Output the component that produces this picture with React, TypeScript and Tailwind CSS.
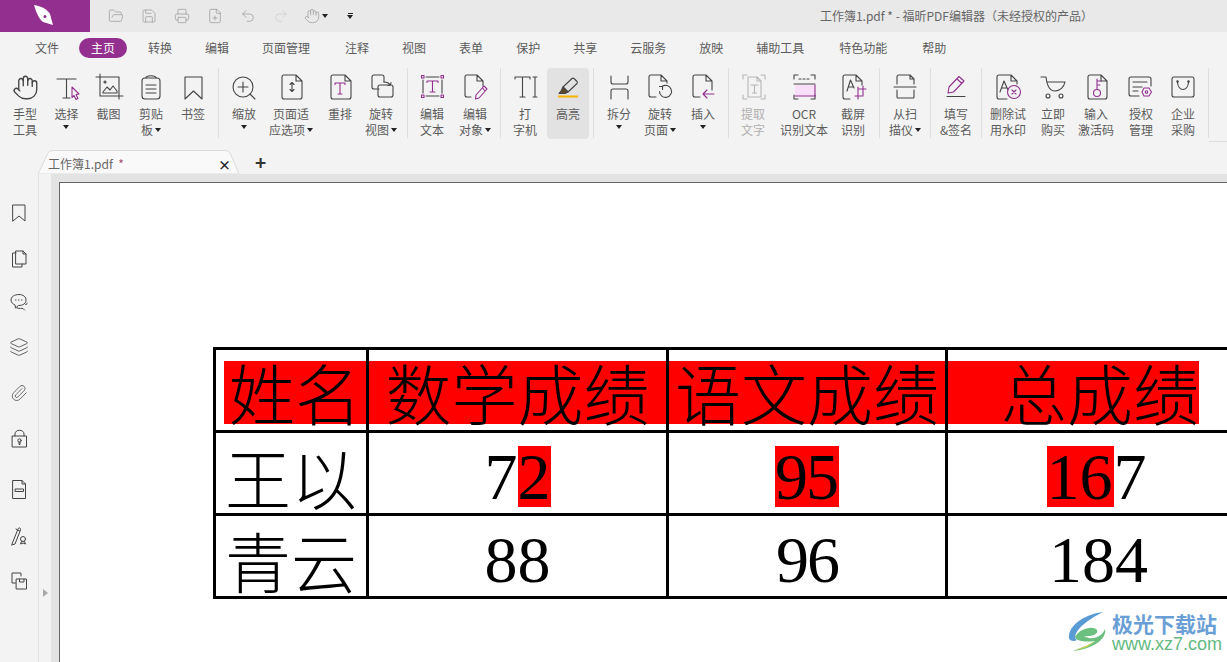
import type {ReactNode} from 'react'
import {FolderOpen, Hand, Layers, Paperclip, Printer, Redo2, Save, FilePlus, Undo2} from 'lucide-react'

const P = '#93308f'
const INK = '#444'

const DOC = 'M9 2H21L27 8V24a2 2 0 0 1-2 2H9a2 2 0 0 1-2-2V4a2 2 0 0 1 2-2z M21 2V8H27'

function Ico({children}: {children: ReactNode}) {
  return (
    <svg width="32" height="28" viewBox="0 0 32 28" fill="none" stroke={INK} strokeWidth="1.1" strokeLinecap="round" strokeLinejoin="round" className="shrink-0">
      {children}
    </svg>
  )
}

function Caret() {
  return <span className="inline-block w-0 h-0 border-x-[3.5px] border-t-[4px] border-x-transparent border-t-[#222]" />
}

type Item = {
  w: string
  a: string
  b?: string
  caret?: 'inline' | 'below'
  off?: boolean
  on?: boolean
  icon: ReactNode
  sep?: string
}

const items: Item[] = [
  {w: 'w-[42px]', a: '手型', b: '工具', icon: <div className="w-8 h-7 flex items-center justify-center"><Hand size={27} strokeWidth={1.2} color={INK} /></div>},
  {w: 'w-[41px]', a: '选择', caret: 'below', icon: <Ico><path d="M6 6H25 M15.5 6V25 M12 25H19" /><path d="M21 14L28 21L25 21.5L27 25.5L25 26.5L23 22.5L21 24.5Z" stroke={P} /></Ico>},
  {w: 'w-[43px]', a: '截图', icon: <Ico><path d="M3 4H26V26 M7 1V23H30" /><path d="M10 19l4-5 3 3 3-4 4 5v2H10z" /><circle cx="12" cy="9" r="1" /></Ico>},
  {w: 'w-[42px]', a: '剪贴', b: '板', caret: 'inline', icon: <Ico><rect x="7" y="5" width="18" height="21" rx="3" /><path d="M11 5c0-3 10-3 10 0 M11 12H21 M11 16H21 M11 20H21" /></Ico>},
  {w: 'w-[42px]', a: '书签', sep: 'ml-[4px] mr-[7px]', icon: <Ico><path d="M8 4H25V26L16.500 18L8 26Z" /></Ico>},
  {w: 'w-[36px]', a: '缩放', caret: 'below', icon: <Ico><circle cx="15" cy="14" r="10" /><path d="M22 21L27 26 M10 14H20 M15 9V19" /></Ico>},
  {w: 'w-[58px]', a: '页面适', b: '应选项', caret: 'inline', icon: <Ico><path d={DOC} /><path d="M17 10V18 M15 11.500L17 9.500L19 11.500 M15 16.500L17 18.500L19 16.500" /></Ico>},
  {w: 'w-[40px]', a: '重排', icon: <Ico><path d={DOC} /><path d="M11 10H21 M11 10v1.500 M21 10v1.500 M16 10V21 M14 21H18" stroke={P} /></Ico>},
  {w: 'w-[42px]', a: '旋转', b: '视图', caret: 'inline', sep: 'ml-[5px] mr-[4px]', icon: <Ico><path d="M14 16H9a2 2 0 0 1-2-2V4a2 2 0 0 1 2-2H17a2 2 0 0 1 2 2V9" /><path d="M13 14a2 2 0 0 1 2-2H26a2 2 0 0 1 2 2V22a2 2 0 0 1-2 2H15a2 2 0 0 1-2-2z" /><path d="M19 9c3 0 5 1 6 3 M23 12.500L25.500 12L26 9.500" /></Ico>},
  {w: 'w-[40px]', a: '编辑', b: '文本', icon: <Ico><path d="M10 4H23 M10 23H23 M7 7V20 M26 7V20" /><path d="M11 8H22 M11 8v1.500 M22 8v1.500 M16.500 8V19 M14 19H19" stroke={P} /><rect x="5.500" y="2.500" width="2.500" height="2.500" stroke={P} /><rect x="25" y="2.500" width="2.500" height="2.500" stroke={P} /><rect x="5.500" y="22" width="2.500" height="2.500" stroke={P} /><rect x="25" y="22" width="2.500" height="2.500" stroke={P} /></Ico>},
  {w: 'w-[46px]', a: '编辑', b: '对象', caret: 'inline', sep: 'ml-[2px] mr-[4px]', icon: <Ico><path d="M12 24H8a2 2 0 0 1-2-2V4a2 2 0 0 1 2-2H18L24 8V13 M18 2V8H24" /><path d="M17 22L25 13L28 16L20 25L16.500 26Z M23.500 15L26 18" stroke={P} /></Ico>},
  {w: 'w-[40px]', a: '打', b: '字机', icon: <Ico><path d="M6 6V4H21V6 M13.500 4V24 M11 24H16 M26 4V24 M24 4H28 M24 24H28" /></Ico>},
  {w: 'w-[42px] ml-[2px]', a: '高亮', on: true, sep: 'ml-[4px] mr-[5px]', icon: <Ico><path d="M11 14L20 5.500a1.500 1.500 0 0 1 2 0L25 8.500a1.500 1.500 0 0 1 0 2L16 19Z" /><path d="M11 14L9 18L7 20.500H13L16 19Z" fill="#5b4a2a" /><path d="M6 23.500H26" stroke="#f5b400" strokeWidth="2" strokeLinecap="butt" /></Ico>},
  {w: 'w-[40px]', a: '拆分', caret: 'below', icon: <Ico><path d="M8 3V9a2 2 0 0 0 2 2H23a2 2 0 0 0 2-2V3 M8 26V18a2 2 0 0 1 2-2H23a2 2 0 0 1 2 2V26" /></Ico>},
  {w: 'w-[42px]', a: '旋转', b: '页面', caret: 'inline', icon: <Ico><path d="M12 24H7a2 2 0 0 1-2-2V4a2 2 0 0 1 2-2H17L23 8V10 M17 2V8H23" /><path d="M18 13.500a6 6 0 1 1-2.500 5 M15.500 13.500H18.500V16.500" /></Ico>},
  {w: 'w-[44px]', a: '插入', caret: 'below', sep: 'ml-[3px] mr-[4px]', icon: <Ico><path d="M13 24H8a2 2 0 0 1-2-2V4a2 2 0 0 1 2-2H19L25 8V17 M19 2V8H25" /><path d="M27 21H16 M20 17L16 21L20 25" stroke={P} /></Ico>},
  {w: 'w-[40px]', a: '提取', b: '文字', off: true, icon: <Ico><g stroke="#b5b5b5"><path d="M6 6V2H10 M24 2H28V6 M6 22V26H10 M24 26H28V22" /><path d="M11 4H20L24 8V24H11Z M20 4V8H24 M14 12H21 M17.500 12V20 M15.500 20H19.500" /></g></Ico>},
  {w: 'w-[62px]', a: 'OCR', b: '识别文本', icon: <Ico><path d="M7 12H27V23H7Z" fill="#f8def8" stroke="none" /><path d="M10 2H6V6 M23 2H27V6 M10 26H6V22 M23 26H27V22 M6 11H27" /><path d="M11 6H22" strokeDasharray="2 2" /><path d="M27 12V23 M7 23H27" stroke={P} /></Ico>},
  {w: 'w-[36px]', a: '截屏', b: '识别', sep: 'ml-[8px] mr-[5px]', icon: <Ico><path d="M13 26H8a2 2 0 0 1-2-2V4a2 2 0 0 1 2-2H19L25 8V12 M19 2V8H25 M10 18L13.500 7L17 15 M11.500 14H16" /><path d="M21 14V26 M18 23H26V13 M21 16H29" stroke={P} /></Ico>},
  {w: 'w-[40px]', a: '从扫', b: '描仪', caret: 'inline', sep: 'ml-[5px] mr-[5px]', icon: <Ico><path d="M8 11V4a2 2 0 0 1 2-2H21L25 6V11 M21 2V6H25 M5 14H27 M8 17V24a1 1 0 0 0 1 1H24a1 1 0 0 0 1-1V17" /></Ico>},
  {w: 'w-[40px]', a: '填写', b: '&签名', sep: 'ml-[5px] mr-[4px]', icon: <Ico><path d="M9 14L19 3.500L24 8L13.500 19L8 20Z M17 6L22 10.500" stroke={P} /><path d="M7 23.500H25" /></Ico>},
  {w: 'w-[44px]', a: '删除试', b: '用水印', icon: <Ico><path d="M15 26H7a2 2 0 0 1-2-2V4a2 2 0 0 1 2-2H19L25 8V11 M19 2V8H25 M8 19L12 8L16 17 M9.500 15H15" /><circle cx="22" cy="19" r="6.500" stroke={P} /><path d="M20 17L24 21 M24 17L20 21" stroke={P} /></Ico>},
  {w: 'w-[46px]', a: '立即', b: '购买', icon: <Ico><path d="M4 4H9C10 13 13 18 18 18C23 18 27 14 28 9H10" /><circle cx="11" cy="23" r="2" /><circle cx="24" cy="23" r="2" /></Ico>},
  {w: 'w-[40px]', a: '输入', b: '激活码', icon: <Ico><path d="M10 2H21L27 8V24a2 2 0 0 1-2 2H10a2 2 0 0 1-2-2V4a2 2 0 0 1 2-2z M21 2V8H27" /><circle cx="17" cy="20" r="3.500" stroke={P} /><path d="M17 16.500V6 M17 8H21 M17 12H20" stroke={P} /></Ico>},
  {w: 'w-[50px]', a: '授权', b: '管理', icon: <Ico><path d="M14 23H6a2 2 0 0 1-2-2V6a2 2 0 0 1 2-2H24a2 2 0 0 1 2 2V13 M8 9H22 M8 14H17 M8 18H13" /><path d="M17 19L19 15H24L26.500 19L24 23H19Z" stroke={P} /><circle cx="21.500" cy="19" r="1.300" stroke={P} /></Ico>},
  {w: 'w-[34px]', a: '企业', b: '采购', sep: 'ml-[8px]', icon: <Ico><rect x="5" y="4" width="22" height="20" rx="2" /><path d="M10.500 9C11 19 21 19 21.500 9" /><circle cx="10.500" cy="8.500" r=".7" fill={INK} /><circle cx="21.500" cy="8.500" r=".7" fill={INK} /></Ico>},
]

const menus = ['转换', '编辑', '页面管理', '注释', '视图', '表单', '保护', '共享', '云服务', '放映', '辅助工具', '特色功能', '帮助']
const wideMenus = ['注释', '特色功能', '帮助']

function Side({children, mb}: {children: ReactNode; mb: string}) {
  return (
    <div className={`h-5 w-5 flex items-center justify-center ${mb}`}>
      <svg width="20" height="20" viewBox="0 0 20 20" fill="none" stroke={INK} strokeWidth="1" strokeLinejoin="round" strokeLinecap="round">
        {children}
      </svg>
    </div>
  )
}

export default function App() {
  return (
    <div className="relative w-[1227px] h-[662px] overflow-hidden bg-[#f3f3f3] text-[#5c5c5c] text-[12px] font-['Noto_Sans_CJK_SC','Noto_Sans',sans-serif]">
      {/* Title bar */}
      <div className="h-8 flex items-center bg-[#e9e9e9]">
        <div className="w-[90px] h-8 bg-[#93308f] pl-[32px] pt-[4px]">
          <svg width="24" height="24" viewBox="0 0 24 24">
            <path d="M2 1C9 2 15 5 18 10L21 21L11 18C7 15 4 8 2 1Z" fill="#fff" />
            <circle cx="13" cy="12.500" r="1.500" fill="#93308f" />
          </svg>
        </div>
        <div className="flex items-center text-[#999] ml-[18px] gap-[17px]">
          <FolderOpen size={16} strokeWidth={1.1} />
          <Save size={16} strokeWidth={1.1} />
          <Printer size={16} strokeWidth={1.1} />
          <FilePlus size={16} strokeWidth={1.1} />
          <Undo2 size={16} strokeWidth={1.1} />
          <Redo2 size={16} strokeWidth={1.1} className="text-[#ccc]" />
          <span className="flex items-center gap-[2px] -ml-[2px]">
            <Hand size={16} strokeWidth={1.1} />
            <Caret />
          </span>
          <span className="flex flex-col items-center gap-[1px] ml-[2px]">
            <span className="w-[5px] h-px bg-[#222]" />
            <Caret />
          </span>
        </div>
        <span className="ml-auto mr-[134px] text-[#666]">工作簿1.pdf * - 福昕PDF编辑器（未经授权的产品）</span>
      </div>

      {/* Menu tabs */}
      <div className="h-8 flex items-center pl-[35px] gap-[33px]">
        <span>文件</span>
        <span className="-ml-[13px] -mr-3 px-3 h-5 leading-5 rounded-full bg-[#93308f] text-white">主页</span>
        {menus.map((m) => (
          <span key={m} className={wideMenus.includes(m) ? 'ml-[2px]' : ''}>{m}</span>
        ))}
      </div>

      {/* Ribbon */}
      <div className="h-[86px] flex pl-1 pt-1 items-start leading-4">
        {items.map((it, i) => (
          <div key={i} className="flex items-start shrink-0">
            <div className={`${it.w} h-[71px] flex flex-col items-center pt-[5px] rounded-sm whitespace-nowrap ${it.on ? 'bg-[#e2e2e2]' : ''} ${it.off ? 'text-[#b0b0b0]' : ''}`}>
              {it.icon}
              <div className="mt-[5px] flex flex-col items-center">
                <span>{it.a}</span>
                {it.b && (
                  <span className="flex items-center gap-[2px]">
                    {it.b}
                    {it.caret === 'inline' && <Caret />}
                  </span>
                )}
                {it.caret === 'below' && <span className="mt-[3px] leading-none flex"><Caret /></span>}
              </div>
            </div>
            {it.sep && <div className={`w-px h-[70px] bg-[#dedede] ${it.sep}`} />}
          </div>
        ))}
        <div className="h-[74px] flex-1 border-b border-[#dedede]" />
      </div>

      {/* Doc tab row */}
      <div className="h-6 flex items-end">
        <div className="relative ml-[38px] w-[202px] h-6 flex items-center pl-[10px] pt-[4px]">
          <svg className="absolute inset-0" width="202" height="24" viewBox="0 0 202 24">
            <path d="M0 24L10 3Q11.500 .5 15 .5H187Q190.500 .5 192 3L201 24Z" fill="#f9f9f9" stroke="#dcdcdc" />
          </svg>
          <span className="relative text-[#666] whitespace-pre">工作簿1.pdf  <span className="text-[#a0526e]">*</span></span>
          <span className="absolute left-[180px] top-[8px] text-[13px] leading-[13px] font-bold text-[#222]">×</span>
        </div>
        <span className="ml-[15px] mb-[3px] text-[19px] leading-[19px] font-bold text-[#333]">+</span>
      </div>

      {/* Body */}
      <div className="flex h-[488px]">
        <div className="w-[39px] border-r border-[#e2e2e2] flex flex-col items-center pt-[29px] pr-px shrink-0">
          <Side mb="mb-[25px]"><path d="M4 2H16V18L10 13L4 18Z" /></Side>
          <Side mb="mb-[24px]"><path d="M7 3H14L17 6V16H7Z M14 3V6H17 M7 5H3.500V19H13V16" /></Side>
          <Side mb="mb-[25px]"><path d="M10 2.500C5 2.500 2 5 2 8C2 10.500 4 12 6 13L6.500 16L9.500 13.500C14 13.500 17 11.500 17 8C17 5 14.500 2.500 10 2.500Z M16 12C17 13 17.500 13.500 18 11 M8 16C11 17 12.500 16 14 16.500L15.500 18" /><path d="M6.500 8H7 M9.500 8H10 M12.500 8H13" /></Side>
          <div className="h-5 w-5 flex items-center justify-center mb-[26px]"><Layers size={20} strokeWidth={1} color={INK} /></div>
          <div className="h-5 w-5 flex items-center justify-center mb-[25px]"><Paperclip size={18} strokeWidth={1} color={INK} /></div>
          <Side mb="mb-[31px]"><rect x="3.500" y="8" width="14" height="11" /><path d="M6 8V6C6 1 15 1 15 6V8" /><circle cx="10.500" cy="12.500" r="1.700" /><path d="M10 14V16.500H11V14" /></Side>
          <Side mb="mb-[27px]"><path d="M4 1.500H13L16.500 5V19.500H4Z M13 1.500V5H16.500" /><rect x="6.500" y="10" width="8" height="2.500" /></Side>
          <Side mb="mb-[25px]"><path d="M3 18L9 3C10 1 12 2 11.500 4L6 18L3 19Z M7 3L10.500 5" /><circle cx="14" cy="13" r="2.500" /><path d="M12.500 15.500L11.500 18L14 17L16.500 18L15.500 15.500" /></Side>
          <Side mb=""><path d="M12 5V2H3V12H6.500" /><rect x="7.500" y="8" width="10" height="10" /><path d="M10.500 8V11H15V8" /></Side>
        </div>
        <div className="w-3 shrink-0 flex items-start pl-1 pt-[415px]">
          <span className="w-0 h-0 border-y-[4px] border-l-[5px] border-y-transparent border-l-[#aaa]" />
        </div>
        <div className="flex-1 bg-[#e3e3e3] pl-2 pt-2">
          <div className="h-full bg-white border-l border-t border-[#666] pl-[153px] pt-[164px] overflow-hidden">
            <div className="grid grid-cols-[153px_300px_279px_298px] w-[1030px] border-l-[3px] border-t-[3px] border-black text-black font-['Noto_Sans_CJK_SC',serif] text-[66px] font-light">
              <Head className="ml-[8px]">姓名</Head>
              <Head>数学成绩</Head>
              <Head>语文成绩</Head>
              <Head className="pl-[53px] mr-[44px]">总成绩</Head>

              <Cell>王以</Cell>
              <Cell><Num>7<Mark>2</Mark></Num></Cell>
              <Cell><Num><span className="bg-[#ff0000] h-[61px] inline-block tracking-[-2px] pr-[2px]">95</span></Num></Cell>
              <Cell><Num><span className="bg-[#ff0000] h-[61px] inline-block ml-[2px] pr-px">16</span>7</Num></Cell>

              <Cell>青云</Cell>
              <Cell><Num>88</Num></Cell>
              <Cell><Num><span className="tracking-[-2px]">96</span></Num></Cell>
              <Cell><Num><span className="pl-[6px]">184</span></Num></Cell>
            </div>
          </div>
        </div>
      </div>

      {/* Watermark */}
      <div className="absolute left-[1067px] top-[611px] flex items-start">
        <svg width="44" height="42" viewBox="0 0 44 42" fill="none">
          <path d="M36 1C20 3 4 12 2 24C1 30 6 31 10 29C5 26 10 14 36 1Z" fill="#5b9bd5" />
          <path d="M8 26C12 18 26 14 30 19C32 23 24 26 17 25C22 29 34 28 38 18C40 28 26 38 6 40C16 36 24 33 28 30C20 31 10 31 8 26Z" fill="#6cc07f" />
          <path d="M6 40C14 37 22 34 28 30L20 36Z" fill="#e5d94c" />
        </svg>
        <div className="flex flex-col items-start ml-[1px] font-['Noto_Sans_CJK_SC',sans-serif]">
          <span className="text-[21px] leading-[24px] font-bold text-[#6a9fd6] whitespace-nowrap">极光下载站</span>
          <span className="text-[18px] leading-[18px] text-[#62b981] font-['Liberation_Sans',sans-serif] whitespace-nowrap">www.xz7.com</span>
        </div>
      </div>
    </div>
  )
}

function Head({children, className = ''}: {children: ReactNode; className?: string}) {
  return (
    <div className="h-[83px] border-r-[3px] border-b-[3px] border-black pt-[11px]">
      <div className={`h-[63px] bg-[#ff0000] leading-[60px] whitespace-nowrap flex justify-center ${className}`}>
        <span className={className.includes('pl-') ? 'w-full' : ''}>{children}</span>
      </div>
    </div>
  )
}

function Cell({children}: {children: ReactNode}) {
  return (
    <div className="h-[83px] border-r-[3px] border-b-[3px] border-black flex justify-center pt-[13px] leading-[61px] whitespace-nowrap">
      {children}
    </div>
  )
}

function Num({children}: {children: ReactNode}) {
  return <span className="font-['Liberation_Serif',serif] text-[66px] font-normal leading-[61px] flex">{children}</span>
}

function Mark({children}: {children: ReactNode}) {
  return <span className="bg-[#ff0000] h-[61px] inline-block">{children}</span>
}
